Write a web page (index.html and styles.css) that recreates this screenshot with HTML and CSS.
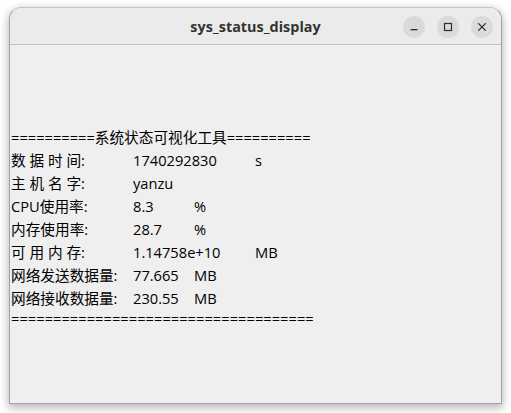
FILE: index.html
```html
<!DOCTYPE html>
<html lang="zh-CN">
<head>
<meta charset="utf-8">
<title>sys_status_display</title>
<link rel="stylesheet" href="styles.css">
</head>
<body>
<div class="window">
  <header class="titlebar">
    <div class="title">sys_status_display</div>
    <div class="controls">
      <span class="btn"><svg width="22" height="22" viewBox="0 0 22 22"><rect x="7.5" y="13" width="7" height="1.3" fill="#2e2e2e"/></svg></span>
      <span class="btn"><svg width="22" height="22" viewBox="0 0 22 22"><rect x="7.5" y="7.5" width="7" height="7" fill="none" stroke="#2e2e2e" stroke-width="1.2"/></svg></span>
      <span class="btn"><svg width="22" height="22" viewBox="0 0 22 22"><path d="M7.6 7.6 L14.4 14.4 M14.4 7.6 L7.6 14.4" stroke="#2e2e2e" stroke-width="1.3" stroke-linecap="round"/></svg></span>
    </div>
  </header>
  <main class="content">
    <div class="row">==========系统状态可视化工具==========</div>
    <div class="row"><span class="label">数 据 时 间:</span><span class="val wide">1740292830</span><span>s</span></div>
    <div class="row"><span class="label">主 机 名 字:</span><span class="val">yanzu</span></div>
    <div class="row"><span class="label">CPU使用率:</span><span class="val">8.3</span><span>%</span></div>
    <div class="row"><span class="label">内存使用率:</span><span class="val">28.7</span><span>%</span></div>
    <div class="row"><span class="label">可 用 内 存:</span><span class="val wide">1.14758e+10</span><span>MB</span></div>
    <div class="row"><span class="label">网络发送数据量:</span><span class="val">77.665</span><span>MB</span></div>
    <div class="row"><span class="label">网络接收数据量:</span><span class="val">230.55</span><span>MB</span></div>
    <div class="row rule-end">====================================</div>
  </main>
</div>
</body>
</html>
```

FILE: styles.css
```css
html, body {
  margin: 0;
  padding: 0;
}

body {
  background: #ffffff;
  padding: 7px 0 0 9px;
  width: 511px;
  height: 413px;
  box-sizing: border-box;
  overflow: hidden;
}

.window {
  width: 493px;
  height: 397px;
  box-sizing: border-box;
  border: 1px solid #a2a2a2;
  border-top-color: #c4c4c4;
  border-radius: 12px 12px 0 0;
  background: #efefef;
  box-shadow: 0 3px 9px 1px rgba(0, 0, 0, 0.28);
  display: flex;
  flex-direction: column;
  overflow: hidden;
}

.titlebar {
  height: 37px;
  box-sizing: border-box;
  background: #ebebeb;
  border-bottom: 1px solid #c2c2c2;
  border-radius: 11px 11px 0 0;
  display: grid;
  grid-template-columns: 1fr auto 1fr;
  align-items: center;
}

.title {
  grid-column: 2;
  font-family: "Open Sans", "Noto Sans", sans-serif;
  font-weight: 700;
  font-size: 14.4px;
  color: #333333;
  padding-top: 1px;
}

.controls {
  grid-column: 3;
  justify-self: end;
  display: flex;
  gap: 12px;
  padding-right: 8px;
  padding-top: 1px;
}

.btn {
  width: 22px;
  height: 22px;
  border-radius: 50%;
  background: #dadada;
  display: flex;
}

.content {
  flex: 1;
  padding: 78px 0 0 1px;
  font-family: "Open Sans", "Noto Sans CJK SC", sans-serif;
  font-size: 14.67px;
  color: #000000;
  display: flex;
  flex-direction: column;
}

.row {
  display: flex;
  padding-top: 5px;
  line-height: 18px;
  white-space: pre;
}

.row.rule-end {
  padding-top: 2px;
  letter-spacing: 0.03px;
}

.label {
  width: 122px;
}

.val {
  width: 61px;
}

.val.wide {
  width: 122px;
}
```
